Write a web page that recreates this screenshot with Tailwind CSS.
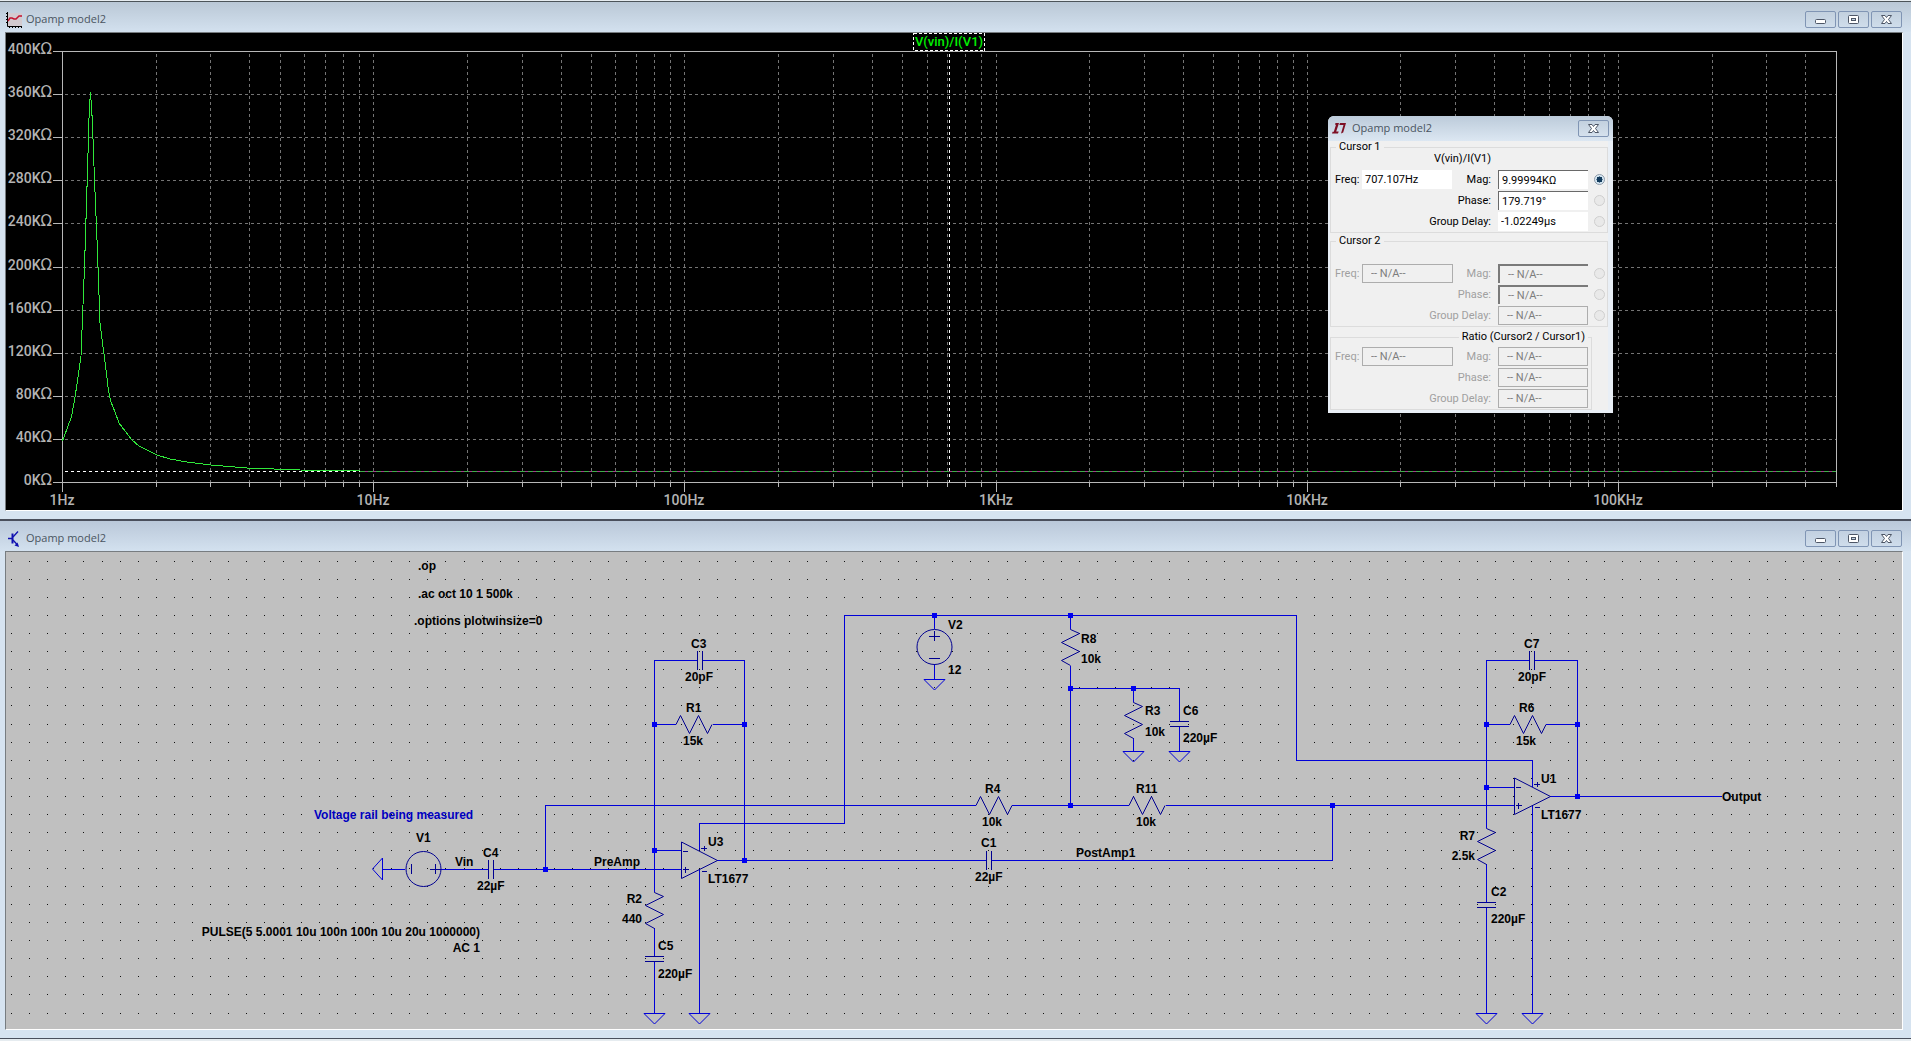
<!DOCTYPE html>
<html lang="en">
<head>
  <meta charset="UTF-8">
  <title>Opamp model2</title>
  <meta name="viewport" content="width=device-width, initial-scale=1">
  <script src="https://cdn.jsdelivr.net/npm/@tailwindcss/browser@4"></script>
</head>
<body class="bg-[#e6ecf0] pt-px font-['Open_Sans',sans-serif]">

  <!-- Window button glyphs -->
  <svg class="hidden">
    <symbol id="glyph-min" viewBox="0 0 13 11">
      <rect x="1.5" y="5.5" width="10" height="4" rx="1" fill="#fff" stroke="#4d5666" />
    </symbol>
    <symbol id="glyph-max" viewBox="0 0 13 11">
      <rect x="1.5" y="1.5" width="10" height="8" rx="1" fill="#fff" stroke="#4d5666" />
      <rect x="4.5" y="4.5" width="4" height="2" fill="#c3d2e2" stroke="#4d5666" />
    </symbol>
    <symbol id="glyph-close" viewBox="0 0 13 11">
      <path d="M1.5 1.5h3.5l1.5 2 1.5-2h3.500l-3 4 3 4h-3.500l-1.500-2-1.500 2h-3.500l3-4z" fill="#fff" stroke="#4d5666" stroke-linejoin="round" />
    </symbol>
  </svg>

  <!-- Waveform window -->
  <section class="relative border-t border-[#4c5459] bg-[#d6e3f0] pb-2">
    <header class="flex h-[30px] items-center bg-linear-to-b from-[#bac8d6] to-[#d3e1ef] pt-[5px] pr-[9px] pl-[6px]">
      <svg class="size-4" viewBox="0 0 16 16">
        <rect x="2" y="1" width="14" height="13" fill="#d3cbd0" />
        <path d="M1.500 0v14.500H16" fill="none" stroke="#000" />
        <path d="M0 1.500h1M0 4.500h1M0 7.500h1M0 10.500h1M3.500 15v1M6.500 15v1M9.500 15v1M12.500 15v1M15.500 15v1" stroke="#000" />
        <path d="M2 9l2-3h2l2 1h2l3-3h3" fill="none" stroke="#c4122f" stroke-width="1.500" />
      </svg>
      <h1 class="ml-1 flex-1 text-[11px] text-[#4a5560]">Opamp model2</h1>
      <div class="flex gap-[2px]">
        <button class="flex h-[17px] w-[31px] items-center justify-center rounded-xs border border-[#8095b4]" aria-label="Minimize"><svg class="h-[11px] w-[13px]"><use href="#glyph-min" /></svg></button>
        <button class="flex h-[17px] w-[31px] items-center justify-center rounded-xs border border-[#8095b4]" aria-label="Maximize"><svg class="h-[11px] w-[13px]"><use href="#glyph-max" /></svg></button>
        <button class="flex h-[17px] w-[31px] items-center justify-center rounded-xs border border-[#8095b4]" aria-label="Close"><svg class="h-[11px] w-[13px]"><use href="#glyph-close" /></svg></button>
      </div>
    </header>
    <div class="mr-2 ml-[5px] border border-t-[#777c80] border-r-white border-b-white border-l-[#777c80] bg-black">
      <svg id="plot" class="block w-full" viewBox="6 33 1896 477" shape-rendering="crispEdges">
        <g id="plot-grid" stroke="#747474" stroke-dasharray="3 3"></g>
        <g id="plot-axes" stroke="#b8b8b8" fill="none"></g>
        <g id="plot-labels" class="fill-[#b4b4b4] font-[Roboto] text-[14px] font-medium"></g>
        <!-- cursor 1 -->
        <path d="M949.500 54V482" stroke="#fff" stroke-dasharray="3 3" />
        <path d="M65 471.500H360" stroke="#fff" stroke-dasharray="3 3" />
        <path d="M360 471.500H1836" stroke="#a8358f" />
        <path d="M360 471.500H1836" stroke="#3fae4a" stroke-dasharray="5 3" />
        <path d="M62.500 441L68 426L71.500 417L75 397L77.500 381L81 356L84.500 267L87.300 177L89.300 108L90.500 92L92.300 120L94.500 180L97.300 247L100 323L107.300 380L108.300 390L111 402L115 412L119 423L125 431L132 440L139 446L147 450L157 455L170 459L187 462L211 465L247 468L300 470L360 471" fill="none" stroke="#2fe83a" />
        <rect x="913.500" y="33.500" width="71" height="17" fill="#000" stroke="#fff" stroke-dasharray="3 2" />
        <text x="949" y="46" text-anchor="middle" class="fill-[#00f000] font-[Roboto] text-[13px] font-medium">V(vin)/I(V1)</text>
      </svg>
    </div>

    <!-- Cursor readout -->
    <div class="absolute top-[114px] right-[298px] w-[285px] rounded-t-md bg-[#e9eff6] font-[Roboto] text-[11px] text-black">
      <div class="flex h-[25px] items-center rounded-t-md bg-linear-to-b from-[#bccbda] to-[#dce7f2] pr-1 pl-1">
        <svg class="h-[11px] w-[14px]" viewBox="0 0 14 11">
          <path d="M3.500 0h3.500l-2.800 8.500h2.500l-.700 2H0l.600-1.700h1.200L4 1.700H3z" fill="#7d0f24" />
          <path d="M8 0h6l-2.800 9.500-2.200 1 2.500-8.500H7.300z" fill="#7d0f24" />
        </svg>
        <h2 class="ml-[6px] flex-1 font-['Open_Sans'] text-[11px] text-[#4a5560]">Opamp model2</h2>
        <button class="flex h-[17px] w-[31px] items-center justify-center rounded-xs border border-[#8095b4]" aria-label="Close readout"><svg class="h-[11px] w-[13px]"><use href="#glyph-close" /></svg></button>
      </div>
      <div class="mr-[5px] mb-[3px] ml-[2px] bg-[#f0f0f0] leading-3">
        <fieldset class="border border-[#dcdcdc] pr-[2px] pl-1">
          <legend class="ml-px px-[3px]">Cursor 1</legend>
          <p class="mb-1 pl-[99px]">V(vin)/I(V1)</p>
          <div class="flex h-[21px] items-center">
            <label for="c1-freq" class="w-[27px]">Freq:</label>
            <input id="c1-freq" class="h-[19px] w-[90px] bg-white px-[3px]" value="707.107Hz">
            <label for="c1-mag" class="ml-auto pr-[7px]">Mag:</label>
            <input id="c1-mag" class="h-[19px] w-[90px] border-t border-l border-[#696969] bg-white px-[3px]" value="9.99994KΩ">
            <input type="radio" name="c1" aria-label="Attach to magnitude" checked class="ml-[6px] size-[11px] appearance-none rounded-full border border-[#8e9aa8] bg-[#e8f2f8] bg-radial from-[#123a5c] from-45% to-[#d9eaf5] to-50%">
          </div>
          <div class="flex h-[21px] items-center">
            <label for="c1-phase" class="ml-auto pr-[7px]">Phase:</label>
            <input id="c1-phase" class="h-[19px] w-[90px] border-t border-l border-[#696969] bg-white px-[3px]" value="179.719°">
            <input type="radio" name="c1" aria-label="Attach to phase" disabled class="ml-[6px] size-[11px] appearance-none rounded-full border border-[#cfcfcf] bg-[#e9e9e9]">
          </div>
          <div class="flex h-[21px] items-center">
            <label for="c1-delay" class="ml-auto pr-[7px]">Group Delay:</label>
            <input id="c1-delay" class="h-[19px] w-[90px] bg-white px-[3px]" value="-1.02249µs">
            <input type="radio" name="c1" aria-label="Attach to group delay" disabled class="ml-[6px] size-[11px] appearance-none rounded-full border border-[#cfcfcf] bg-[#e9e9e9]">
          </div>
        </fieldset>
        <fieldset disabled class="mt-[2px] border border-[#dcdcdc] pt-4 pr-[2px] pl-1 text-[#a0a0a0]">
          <legend class="ml-px px-[3px] text-black">Cursor 2</legend>
          <div class="flex h-[21px] items-center">
            <label for="c2-freq" class="w-[27px]">Freq:</label>
            <input id="c2-freq" class="h-[19px] w-[91px] border border-[#adadad] px-2 text-[#7d7d7d]" value="-- N/A--">
            <label for="c2-mag" class="ml-auto pr-[7px]">Mag:</label>
            <input id="c2-mag" class="h-[19px] w-[90px] border-t-2 border-l-2 border-[#7a7a7a] px-2 text-[#7d7d7d]" value="-- N/A--">
            <input type="radio" name="c2" aria-label="Attach to magnitude" class="ml-[6px] size-[11px] appearance-none rounded-full border border-[#cfcfcf] bg-[#e9e9e9]">
          </div>
          <div class="flex h-[21px] items-center">
            <label for="c2-phase" class="ml-auto pr-[7px]">Phase:</label>
            <input id="c2-phase" class="h-[19px] w-[90px] border-t-2 border-l-2 border-[#7a7a7a] px-2 text-[#7d7d7d]" value="-- N/A--">
            <input type="radio" name="c2" aria-label="Attach to phase" class="ml-[6px] size-[11px] appearance-none rounded-full border border-[#cfcfcf] bg-[#e9e9e9]">
          </div>
          <div class="flex h-[21px] items-center">
            <label for="c2-delay" class="ml-auto pr-[7px]">Group Delay:</label>
            <input id="c2-delay" class="h-[19px] w-[90px] border border-[#adadad] px-2 text-[#7d7d7d]" value="-- N/A--">
            <input type="radio" name="c2" aria-label="Attach to group delay" class="ml-[6px] size-[11px] appearance-none rounded-full border border-[#cfcfcf] bg-[#e9e9e9]">
          </div>
        </fieldset>
        <fieldset disabled class="mt-1 mr-4 border border-[#dcdcdc] pt-[3px] pr-[3px] pl-1 text-[#a0a0a0]">
          <legend class="ml-auto px-[3px] text-black">Ratio (Cursor2 / Cursor1)</legend>
          <div class="flex h-[21px] items-center">
            <label for="r-freq" class="w-[27px]">Freq:</label>
            <input id="r-freq" class="h-[19px] w-[91px] border border-[#adadad] px-2 text-[#7d7d7d]" value="-- N/A--">
            <label for="r-mag" class="ml-auto pr-[7px]">Mag:</label>
            <input id="r-mag" class="h-[19px] w-[90px] border border-[#adadad] px-2 text-[#7d7d7d]" value="-- N/A--">
          </div>
          <div class="flex h-[21px] items-center">
            <label for="r-phase" class="ml-auto pr-[7px]">Phase:</label>
            <input id="r-phase" class="h-[19px] w-[90px] border border-[#adadad] px-2 text-[#7d7d7d]" value="-- N/A--">
          </div>
          <div class="flex h-[21px] items-center">
            <label for="r-delay" class="ml-auto pr-[7px]">Group Delay:</label>
            <input id="r-delay" class="h-[19px] w-[90px] border border-[#adadad] px-2 text-[#7d7d7d]" value="-- N/A--">
          </div>
        </fieldset>
      </div>
    </div>
  </section>

  <!-- Schematic window -->
  <section class="border-t-2 border-b border-t-[#4a4f5c] border-b-[#4a4f5c] bg-[#d6e3f0] pb-2">
    <header class="flex h-[30px] items-center bg-linear-to-b from-[#bac8d9] to-[#d3e1ef] pt-[5px] pr-[9px] pl-[6px]">
      <svg class="size-4" viewBox="0 0 16 16" fill="none" stroke="#1010b0">
        <path d="M2 7.500h4" stroke-width="1.500" />
        <path d="M6.500 2.500v10" stroke-width="2" />
        <path d="M7 6l5-5.500M7 9l5 5.500" stroke-width="1.300" />
        <path d="M13 16l-4.500-1.500 3-3z" fill="#1010b0" stroke="none" />
      </svg>
      <h1 class="ml-1 flex-1 text-[11px] text-[#4a5560]">Opamp model2</h1>
      <div class="flex gap-[2px]">
        <button class="flex h-[17px] w-[31px] items-center justify-center rounded-xs border border-[#8095b4]" aria-label="Minimize"><svg class="h-[11px] w-[13px]"><use href="#glyph-min" /></svg></button>
        <button class="flex h-[17px] w-[31px] items-center justify-center rounded-xs border border-[#8095b4]" aria-label="Maximize"><svg class="h-[11px] w-[13px]"><use href="#glyph-max" /></svg></button>
        <button class="flex h-[17px] w-[31px] items-center justify-center rounded-xs border border-[#8095b4]" aria-label="Close"><svg class="h-[11px] w-[13px]"><use href="#glyph-close" /></svg></button>
      </div>
    </header>
    <div class="mr-2 ml-[5px] border border-t-[#777c80] border-r-white border-b-white border-l-[#777c80] bg-[#c0c0c0]">
      <svg class="block w-full" viewBox="6 552 1896 477">
        <defs>
          <path id="res-h" d="M0 0.500L4.500 -8.500L13.500 9.500L22.500 -8.500L31.500 9.500L36 0.500" />
          <path id="res-v" d="M.500 0L.500 .500L9.500 4.500L-8.500 13.500L9.500 22.500L-8.500 31.500L.500 36.500" />
          <path id="cap-h" d="M-1.500 -9V10M3.500 -9V10" />
          <path id="cap-v" d="M-9 -1.500H10M-9 3.500H10" />
          <path id="gnd" d="M-10 .500H11L.500 11z" />
          <g id="opamp">
            <path d="M.500 -18L.500 18.500L36.500 .500z" />
            <path d="M2 -8.500H7M2 9.500H8M4.500 7V13M20 -11.500H26M23.500 -14V-9M21 11.500H26" />
          </g>
        </defs>
        <path id="grid-dots" fill="#111" shape-rendering="crispEdges" />

        <!-- wires -->
        <g fill="none" stroke="#0000d8" shape-rendering="crispEdges">
          <path d="M383 869.500H405M440 869.500H488M494 869.500H681M545.500 869V805.500H976" />
          <path d="M697 660.500H654.500V892M702 660.500H744.500V860M654 724.500H676M713 724.500H744M654 850.500H681" />
          <path d="M654.500 928V957M654.500 962V1013M699.500 869V1013" />
          <path d="M699.500 850V823.500H844.500V615.500H1296.500V760.500H1532.500V787" />
          <path d="M717 860.500H986M992 860.500H1332.500V805" />
          <path d="M934.500 615V629M934.500 664V679" />
          <path d="M1070.500 615V629M1070.500 666V805M1070 688.500H1179.500V721M1133.500 688V702M1133.500 738V751M1179.500 727V751" />
          <path d="M1012 805.500H1129M1166 805.500H1514" />
          <path d="M1529 660.500H1486.500V828M1535 660.500H1577.500V796M1486 724.500H1510M1546 724.500H1577M1486 787.500H1514" />
          <path d="M1486.500 864V902M1486.500 908V1013M1532.500 805V1013M1550 796.500H1722" />
        </g>

        <!-- components -->
        <g fill="none" stroke="#000090">
          <circle cx="423.500" cy="869" r="17.500" />
          <path d="M411.500 864V874M430 869.500H441M435.500 864V874" />
          <circle cx="934.500" cy="647" r="17.500" />
          <path d="M929 636.500H940M934.500 631V641M929 658.500H940" />
          <use href="#cap-h" x="490" y="869" />
          <use href="#cap-h" x="699" y="660" />
          <use href="#cap-h" x="988" y="860" />
          <use href="#cap-h" x="1531" y="660" />
          <use href="#cap-v" x="654" y="958" />
          <use href="#cap-v" x="1179" y="723" />
          <use href="#cap-v" x="1486" y="904" />
          <use href="#res-h" x="676" y="724" />
          <use href="#res-h" x="976" y="805" />
          <use href="#res-h" x="1129" y="805" />
          <use href="#res-h" x="1510" y="724" />
          <use href="#res-v" x="654" y="892" />
          <use href="#res-v" x="1070" y="629" />
          <use href="#res-v" x="1133" y="702" />
          <use href="#res-v" x="1486" y="828" />
          <use href="#opamp" x="681" y="860" />
          <use href="#opamp" x="1514" y="796" />
        </g>
        <g fill="none" stroke="#0000d8">
          <path d="M382.500 858V880L372.500 869z" />
          <use href="#gnd" x="934" y="679" />
          <use href="#gnd" x="1133" y="751" />
          <use href="#gnd" x="1179" y="751" />
          <use href="#gnd" x="654" y="1013" />
          <use href="#gnd" x="699" y="1013" />
          <use href="#gnd" x="1486" y="1013" />
          <use href="#gnd" x="1532" y="1013" />
        </g>
        <path id="nodes" fill="#0000f0" shape-rendering="crispEdges" />

        <!-- labels -->
        <g id="schematic-labels" class="fill-black font-['Liberation_Sans'] text-[12px] font-bold"></g>
        <text x="314" y="819" class="fill-[#0000c0] font-['Liberation_Sans'] text-[12px] font-bold">Voltage rail being measured</text>
      </svg>
    </div>
  </section>

  <script>
    const SVG_NS = "http://www.w3.org/2000/svg";

    function addPath(parent, d) {
      const path = document.createElementNS(SVG_NS, "path");
      path.setAttribute("d", d);
      parent.appendChild(path);
    }

    function addText(parent, x, y, text, anchor = "start") {
      const el = document.createElementNS(SVG_NS, "text");
      el.setAttribute("x", x);
      el.setAttribute("y", y);
      el.setAttribute("text-anchor", anchor);
      el.textContent = text;
      parent.appendChild(el);
      return el;
    }

    // ====== Plot ======
    const LEFT = 62, RIGHT = 1836, TOP = 51, BOTTOM = 482, DECADE = 311.2;
    const grid = document.getElementById("plot-grid");
    const axes = document.getElementById("plot-axes");
    const plotLabels = document.getElementById("plot-labels");

    addPath(axes, `M${LEFT}.5 ${TOP}.5H${RIGHT}.5V${BOTTOM + 5}M${LEFT}.5 ${TOP}V${BOTTOM + 10}M${LEFT} ${BOTTOM}.5H${RIGHT}`);

    for (let i = 0; i <= 10; i++) {
      const y = TOP + Math.round(i * 43.1);
      addPath(axes, `M53 ${y}.5H${LEFT}`);
      if (i > 0 && i < 10) addPath(grid, `M${LEFT + 3} ${y}.5H${RIGHT}`);
      const label = addText(plotLabels, 52, y + 3, `${400 - i * 40}K`, "end");
      const unit = document.createElementNS(SVG_NS, "tspan");
      unit.setAttribute("class", "font-['DejaVu_Sans'] text-[15px] font-normal");
      unit.textContent = "Ω";
      label.appendChild(unit);
    }

    ["1Hz", "10Hz", "100Hz", "1KHz", "10KHz", "100KHz"].forEach((label, decade) => {
      addText(plotLabels, Math.round(LEFT + decade * DECADE), 505, label, "middle");
      for (let m = 1; m < 10; m++) {
        const x = Math.round(LEFT + (decade + Math.log10(m)) * DECADE);
        if (x === LEFT || x >= RIGHT - 1) continue;
        addPath(grid, `M${x}.5 ${TOP + 3}V${BOTTOM}`);
        addPath(axes, `M${x}.5 ${BOTTOM}V${BOTTOM + (m === 1 ? 10 : 5)}`);
      }
    });

    // ====== Schematic grid ======
    let dots = "";
    for (let r = 0; r < 26; r++) {
      for (let c = 0; c < 105; c++) {
        dots += `M${Math.floor(11.5 + c * 18.1)} ${Math.floor(561.5 + r * 18.06)}h1v1h-1z`;
      }
    }
    document.getElementById("grid-dots").setAttribute("d", dots);

    // ====== Junctions ======
    const nodes = [
      [545, 869], [654, 724], [744, 724], [654, 850], [744, 860], [934, 615], [1070, 615], [1070, 688],
      [1133, 688], [1070, 805], [1332, 805], [1486, 724], [1577, 724], [1486, 787], [1577, 796]
    ];
    document.getElementById("nodes").setAttribute("d", nodes.map(([x, y]) => `M${x - 2} ${y - 2}h5v5h-5z`).join(""));

    // ====== Schematic labels ======
    const labels = [
      [418, 570, ".op"], [418, 598, ".ac oct 10 1 500k"], [414, 625, ".options plotwinsize=0"],
      [416, 842, "V1"], [455, 866, "Vin"], [483, 857, "C4"], [477, 890, "22µF"],
      [480, 936, "PULSE(5 5.0001 10u 100n 100n 10u 20u 1000000)", "end"], [480, 952, "AC 1", "end"],
      [691, 648, "C3"], [685, 681, "20pF"], [686, 712, "R1"], [683, 745, "15k"],
      [708, 846, "U3"], [708, 883, "LT1677"], [594, 866, "PreAmp"],
      [642, 903, "R2", "end"], [642, 923, "440", "end"], [658, 950, "C5"], [658, 978, "220µF"],
      [948, 629, "V2"], [948, 674, "12"],
      [1081, 643, "R8"], [1081, 663, "10k"], [1145, 715, "R3"], [1145, 736, "10k"],
      [1183, 715, "C6"], [1183, 742, "220µF"],
      [985, 793, "R4"], [982, 826, "10k"], [1136, 793, "R11"], [1136, 826, "10k"],
      [981, 847, "C1"], [975, 881, "22µF"], [1076, 857, "PostAmp1"],
      [1524, 648, "C7"], [1518, 681, "20pF"], [1519, 712, "R6"], [1516, 745, "15k"],
      [1541, 783, "U1"], [1541, 819, "LT1677"], [1722, 801, "Output"],
      [1475, 840, "R7", "end"], [1475, 860, "2.5k", "end"], [1491, 896, "C2"], [1491, 923, "220µF"]
    ];
    const labelGroup = document.getElementById("schematic-labels");
    labels.forEach(([x, y, text, anchor]) => addText(labelGroup, x, y, text, anchor));
  </script>
</body>
</html>
